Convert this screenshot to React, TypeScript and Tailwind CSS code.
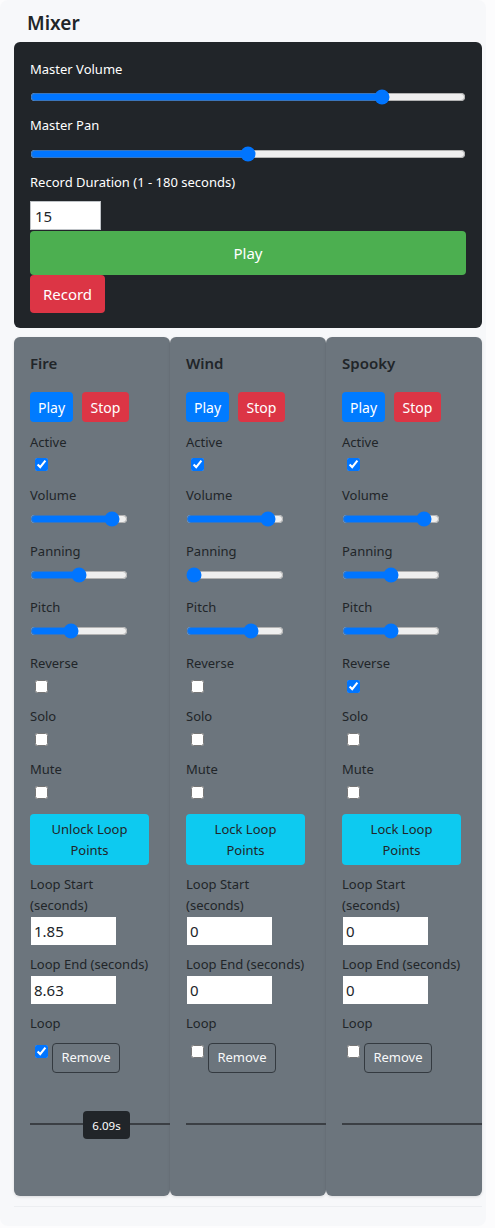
import React, { useState } from "react";

type Channel = {
  name: string;
  volume: number;
  panning: number;
  pitch: number;
  active: boolean;
  reverse: boolean;
  loop: boolean;
  lockLabel: string;
  loopStart: string;
  loopEnd: string;
  marker?: string;
};

const channels: Channel[] = [
  {
    name: "Fire",
    volume: 90,
    panning: 50,
    pitch: 40,
    active: true,
    reverse: false,
    loop: true,
    lockLabel: "Unlock Loop Points",
    loopStart: "1.85",
    loopEnd: "8.63",
    marker: "6.09s",
  },
  {
    name: "Wind",
    volume: 90,
    panning: 0,
    pitch: 70,
    active: true,
    reverse: false,
    loop: false,
    lockLabel: "Lock Loop Points",
    loopStart: "0",
    loopEnd: "0",
  },
  {
    name: "Spooky",
    volume: 90,
    panning: 50,
    pitch: 50,
    active: true,
    reverse: true,
    loop: false,
    lockLabel: "Lock Loop Points",
    loopStart: "0",
    loopEnd: "0",
  },
];

function Label({ children, className = "" }: { children: React.ReactNode; className?: string }) {
  return <div className={`text-[13px] leading-[21px] ${className}`}>{children}</div>;
}

function Check({ checked, className = "" }: { checked: boolean; className?: string }) {
  const [on, setOn] = useState(checked);
  return (
    <input
      type="checkbox"
      checked={on}
      onChange={() => setOn(!on)}
      className={`m-0 ml-[5px] block h-[13px] w-[13px] ${className}`}
    />
  );
}

function Slider({ value, className = "" }: { value: number; className?: string }) {
  const [v, setV] = useState(value);
  return (
    <input
      type="range"
      min={0}
      max={100}
      value={v}
      onChange={(e) => setV(Number(e.target.value))}
      className={`m-0 block h-4 ${className}`}
    />
  );
}

function ChannelCard({ ch }: { ch: Channel }) {
  return (
    <div className="flex w-[156px] shrink-0 flex-col rounded-md bg-[#6c757d] px-4 pt-[14px] pb-[21px] text-[#212529] shadow-[0_1px_3px_rgba(0,0,0,0.12)]">
      <div className="h-6 text-[15px] leading-6 font-semibold">{ch.name}</div>
      <div className="mt-[17px] flex gap-[9px]">
        <button className="h-[30px] w-[43px] rounded-[4px] bg-[#007bff] text-[14px] text-white">Play</button>
        <button className="h-[30px] w-[47px] rounded-[4px] bg-[#dc3545] text-[14px] text-white">Stop</button>
      </div>

      <Label className="mt-[10px]">Active</Label>
      <Check checked={ch.active} className="mt-[5px]" />

      <Label className="mt-[14px]">Volume</Label>
      <Slider value={ch.volume} className="mt-[5px] w-[98px]" />
      <Label className="mt-[14px]">Panning</Label>
      <Slider value={ch.panning} className="mt-[5px] w-[98px]" />
      <Label className="mt-[14px]">Pitch</Label>
      <Slider value={ch.pitch} className="mt-[5px] w-[98px]" />

      <Label className="mt-[14px]">Reverse</Label>
      <Check checked={ch.reverse} className="mt-[6px]" />
      <Label className="mt-[13px]">Solo</Label>
      <Check checked={false} className="mt-[6px]" />
      <Label className="mt-[13px]">Mute</Label>
      <Check checked={false} className="mt-[6px]" />

      <button className="mt-[15px] h-[51px] w-[119px] rounded-[4px] bg-[#0dcaf0] px-2 text-[13px] leading-[21px] text-[#212529]">
        {ch.lockLabel}
      </button>

      <Label className="mt-[9px]">Loop Start (seconds)</Label>
      <input
        defaultValue={ch.loopStart}
        className="mt-[1px] ml-[1px] h-[28px] w-[85px] bg-white px-[3px] text-[15px] text-[#212529] outline-none"
      />
      <Label className="mt-[9px] whitespace-nowrap">Loop End (seconds)</Label>
      <input
        defaultValue={ch.loopEnd}
        className="mt-[1px] ml-[1px] h-[28px] w-[85px] bg-white px-[3px] text-[15px] text-[#212529] outline-none"
      />

      <Label className="mt-[9px]">Loop</Label>
      <div className="mt-[9px] flex items-start">
        <Check checked={ch.loop} className="mt-[2px]" />
        <button className="ml-[4px] h-[30px] w-[68px] rounded-[4px] border border-[#343a40] text-[13px] text-[#f8f9fa]">
          Remove
        </button>
      </div>

      {/* waveform strip */}
      <div className="relative flex h-[102px] w-[140px] items-center">
        <div className="h-[2px] w-full bg-[#3b3f44]" />
        {ch.marker && (
          <div className="absolute top-[38px] left-[53px] flex h-[28px] w-[47px] items-center justify-center rounded-[4px] bg-[#212529] pt-[2px] text-[11.5px] text-white">
            {ch.marker}
          </div>
        )}
      </div>
    </div>
  );
}

export default function App() {
  const [volume, setVolume] = useState(82);
  const [pan, setPan] = useState(50);

  return (
    <div className="min-h-screen bg-[#fcfcfd] font-['Noto_Sans',sans-serif]">
      <div className="w-[486px] rounded-lg bg-[#f7f8fa] pt-[11px] pb-[19px]">
        <h1 className="h-6 pl-[27px] text-[19px] leading-6 font-semibold text-[#212529]">Mixer</h1>

        <div className="mt-[7px] ml-[14px] w-[468px] rounded-md bg-[#212529] px-4 pt-[17px] pb-[15px] text-white">
          <Label>Master Volume</Label>
          <input
            type="range"
            min={0}
            max={100}
            value={volume}
            onChange={(e) => setVolume(Number(e.target.value))}
            className="m-0 mt-[9px] block h-4 w-full"
          />
          <Label className="mt-[10px]">Master Pan</Label>
          <input
            type="range"
            min={0}
            max={100}
            value={pan}
            onChange={(e) => setPan(Number(e.target.value))}
            className="m-0 mt-[10px] block h-4 w-full"
          />
          <Label className="mt-[10px]">Record Duration (1 - 180 seconds)</Label>
          <input
            defaultValue="15"
            className="mt-[8px] block h-[29px] w-[71px] border border-[#bfc3c7] bg-white px-[4px] text-[15px] text-[#212529] outline-none"
          />
          <button className="mt-[1px] block h-[44px] w-full rounded-[4px] bg-[#4caf50] text-[15px] text-white">Play</button>
          <button className="block h-[38px] w-[75px] rounded-[4px] bg-[#dc3545] text-[15px] text-white">Record</button>
        </div>

        <div className="mt-[9px] ml-[14px] w-[468px] border-b border-[#eceef1] pb-[10px]">
          <div className="flex">
            {channels.map((ch) => (
              <ChannelCard key={ch.name} ch={ch} />
            ))}
          </div>
        </div>
      </div>
    </div>
  );
}
